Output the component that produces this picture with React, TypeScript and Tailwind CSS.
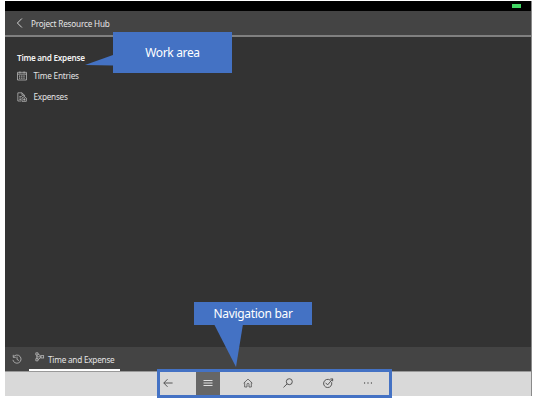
import type { ReactNode } from "react";

function Icon({ children, className = "", box = "0 0 12 12" }: { children: ReactNode; className?: string; box?: string }) {
  return (
    <svg viewBox={box} className={`shrink-0 ${className}`} fill="none" stroke="currentColor" strokeWidth="0.9">
      {children}
    </svg>
  );
}

function Header() {
  return (
    <header className="flex h-[26px] shrink-0 items-center border-b-2 border-[#808080] bg-[#444444] text-[#e4e4e4]">
      <Icon className="ml-[9px] h-3 w-3">
        <path d="M7.9 1.5 3.4 6l4.5 4.5" />
      </Icon>
      <span className="mt-[2px] ml-[5px] text-[8.2px] tracking-[-0.2px]">Project Resource Hub</span>
    </header>
  );
}

function WorkArea() {
  return (
    <main className="flex grow flex-col bg-[#333333] pt-[15px] pl-[12px] text-[#e4e4e4]">
      <h1 className="h-[12px] text-[8.2px] leading-[12px] font-semibold tracking-[-0.28px] text-[#f2f2f2]">Time and Expense</h1>
      <div className="mt-[5px] flex h-[14px] items-center">
        <Icon className="h-[10px] w-[10px] text-[#bdbdbd]">
          <path d="M.6 1.6h10.8v9.2H.6zM.6 3.8h10.8M3.5.5V3M8.5.5V3" />
          <path d="M2.5 6h7M2.5 8.4h7" strokeDasharray="1.4 1.2" strokeWidth="1.5" />
        </Icon>
        <span className="ml-[6.5px] text-[8.2px] tracking-[-0.2px]">Time Entries</span>
      </div>
      <div className="mt-[7px] flex h-[14px] items-center">
        <Icon className="h-[10px] w-[10px] text-[#bdbdbd]">
          <path d="M5 10.8H1V1h5l3 3v1.5M6 1v3h3M2.8 5.5h3M2.8 7.2h2M2.8 9h2" />
          <path d="M6 7.2 8.7 5.5l2.5 1.7v4H6zM8.7 7v3.5M7.5 9h2.5" />
        </Icon>
        <span className="ml-[6.5px] text-[8.2px] tracking-[-0.24px]">Expenses</span>
      </div>
    </main>
  );
}

function AreaSwitcher() {
  return (
    <footer className="flex h-[24px] shrink-0 bg-[#444444] text-[#e4e4e4]">
      <Icon className="mt-[7px] ml-[7px] h-[10px] w-[10px] text-[#c4c4c4]">
        <path d="M1.8 3.5A4.9 4.9 0 1 1 1.1 7M1.5 1v3h3M6 3.2v3.3l2.3 1.4" />
      </Icon>
      <div className="ml-[7px] flex w-[91px] border-b-2 border-white">
        <Icon className="mt-[5px] ml-[6px] h-[10px] w-[10px] text-[#c4c4c4]">
          <path d="M1 1h2.6v2.6H1zM1 8h2.6v2.6H1zM3.6 2.3 7 5M3.6 9.3 7 6.5M2.2 3.6V8M2.2 5.8H7" />
          <rect x="7.2" y="4.4" width="3.2" height="2.8" />
        </Icon>
        <span className="mt-[7px] ml-[3px] text-[8.2px] leading-[12px] tracking-[-0.22px] whitespace-nowrap">Time and Expense</span>
      </div>
    </footer>
  );
}

function NavigationBar() {
  return (
    <nav className="absolute top-[369px] left-[157px] flex h-[29px] w-[235px] items-center border-[3px] border-[#4472c4] bg-[#d9d9d9] text-[#484848]">
      <span className="flex w-[36px] justify-start pb-px pl-[2px]">
        <Icon className="h-3 w-3"><path d="M10.6 6H1.8M5.5 2.2 1.8 6l3.7 3.8" /></Icon>
      </span>
      <span className="flex h-full w-[24px] items-center justify-center bg-[#666666] pb-px text-[#e0e0e0]">
        <Icon className="h-3 w-3"><path d="M1.5 3.5h9M1.5 6h9M1.5 8.5h9" strokeWidth="1" /></Icon>
      </span>
      <span className="flex w-[56px] justify-center pb-px">
        <Icon className="h-[10px] w-[10px]">
          <path d="M.8 6.2 6 1.3l5.2 4.9M2 5.2v5.6h2.8V7.5a1.2 1.2 0 0 1 2.4 0v3.3H10V5.2" />
        </Icon>
      </span>
      <span className="flex w-[24px] justify-center pb-px">
        <Icon className="h-3 w-3">
          <circle cx="7.3" cy="4.7" r="3" /><path d="M5.1 6.9 1.5 10.4" />
        </Icon>
      </span>
      <span className="flex w-[56px] justify-center pb-px">
        <Icon className="h-3 w-3">
          <path d="M8.2 3.2A4.1 4.1 0 1 0 9.6 5.2" />
          <path d="M3.6 5.8 5.6 7.9l4.8-5.6M8.2 2.1l2.5-.3-.1 2.5" />
        </Icon>
      </span>
      <span className="flex w-[24px] justify-center pb-px">
        <Icon className="h-3 w-3">
          <g fill="currentColor" stroke="none"><circle cx="2.6" cy="6" r=".65" /><circle cx="6" cy="6" r=".65" /><circle cx="9.4" cy="6" r=".65" /></g>
        </Icon>
      </span>
    </nav>
  );
}

export default function App() {
  return (
    <div className="relative h-[401px] w-[535px] overflow-hidden bg-white pt-px pl-[5px] font-['Noto_Sans','Open_Sans',sans-serif]">
      <div className="flex h-[395px] w-[527px] flex-col border-r border-[#8a8a8a]">
        <div className="flex h-[10px] shrink-0 justify-end bg-black">
          <span className="mt-[3px] mr-[10px] h-[4px] w-[9px] bg-[#43d764]" />
        </div>
        <Header />
        <WorkArea />
        <AreaSwitcher />
        <div className="h-[25px] shrink-0 border-t border-[#999999] bg-[#d9d9d9]" />
      </div>

      <NavigationBar />

      <div className="absolute top-[32px] left-[113px] flex h-[41px] w-[119px] items-center justify-center bg-[#4472c4] text-[12px] tracking-[-0.35px] text-white">
        <svg viewBox="0 0 28 11" className="absolute top-[23px] left-[-28px] h-[11px] w-[28px]">
          <path d="M28 0v10.5L0 10z" fill="#4472c4" />
        </svg>
        <span>Work area</span>
      </div>
      <div className="absolute top-[302px] left-[194px] flex h-[23px] w-[118px] items-center justify-center bg-[#4472c4] text-[12px] tracking-[-0.3px] text-white">
        <svg viewBox="0 0 29 43" className="absolute top-[22px] left-[20px] h-[43px] w-[29px]">
          <path d="M0 0h29L22 43z" fill="#4472c4" />
        </svg>
        <span className="mt-px">Navigation bar</span>
      </div>
    </div>
  );
}
